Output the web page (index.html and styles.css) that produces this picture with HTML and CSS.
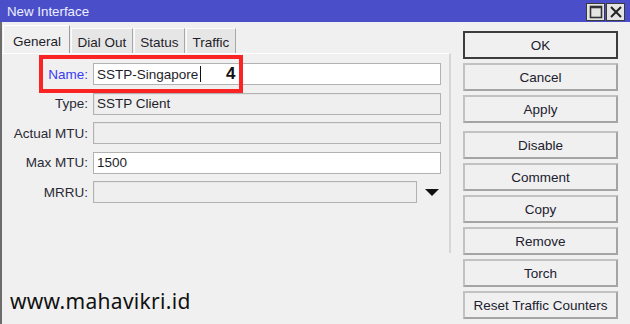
FILE: index.html
```html
<!DOCTYPE html>
<html>
<head>
<meta charset="utf-8">
<link rel="stylesheet" href="styles.css">
</head>
<body>
<div class="window">
  <div class="titlebar">
    <span class="title">New Interface</span>
    <div class="tb-buttons">
      <span class="tb-btn"><svg width="16" height="16" viewBox="0 0 16 16"><rect x="2.5" y="2.5" width="11" height="11" fill="none" stroke="#333" stroke-width="1.6"/><line x1="2.5" y1="3.5" x2="13.5" y2="3.5" stroke="#333" stroke-width="1.6"/></svg></span>
      <span class="tb-btn"><svg width="16" height="16" viewBox="0 0 16 16"><path d="M3 3 L13 13 M13 3 L3 13" stroke="#222" stroke-width="2"/></svg></span>
    </div>
  </div>
  <div class="content">
    <div class="left">
      <div class="tabs">
        <div class="tab active">General</div>
        <div class="tab">Dial Out</div>
        <div class="tab">Status</div>
        <div class="tab">Traffic</div>
      </div>
      <div class="panel">
        <div class="form">
          <div class="label blue">Name:</div>
          <div class="field white"><span>SSTP-Singapore</span><span class="caret"></span></div>
          <div class="label">Type:</div>
          <div class="field">SSTP Client</div>
          <div class="label">Actual MTU:</div>
          <div class="field"></div>
          <div class="label">Max MTU:</div>
          <div class="field white">1500</div>
          <div class="label">MRRU:</div>
          <div class="combo">
            <div class="field short"></div>
            <svg class="arrow" width="14" height="8" viewBox="0 0 14 8"><path d="M0 0 H14 L7 7 Z" fill="#111"/></svg>
          </div>
        </div>
      </div>
      <div class="watermark">www.mahavikri.id</div>
    </div>
    <div class="buttons">
      <div class="btn default">OK</div>
      <div class="btn">Cancel</div>
      <div class="btn">Apply</div>
      <div class="btn sep">Disable</div>
      <div class="btn">Comment</div>
      <div class="btn">Copy</div>
      <div class="btn">Remove</div>
      <div class="btn">Torch</div>
      <div class="btn">Reset Traffic Counters</div>
    </div>
  </div>
  <div class="highlight"></div>
  <div class="step">4</div>
</div>
</body>
</html>
```

FILE: styles.css
```css
* { box-sizing: border-box; }
html, body { margin: 0; padding: 0; }
body {
  width: 630px;
  height: 324px;
  overflow: hidden;
  font-family: "Liberation Sans", Arial, sans-serif;
  font-size: 13.5px;
  color: #1e1e2a;
}
.window {
  position: relative;
  width: 630px;
  height: 324px;
  background: #f0f0f0;
}
.titlebar {
  height: 22px;
  background: #4b4ec9;
  display: flex;
  align-items: center;
  justify-content: space-between;
  padding-left: 7px;
}
.title {
  color: #eef0ff;
  font-size: 13.3px;
  padding-top: 1px;
}
.tb-buttons {
  display: flex;
  gap: 1px;
  padding-right: 5px;
  align-self: flex-start;
  padding-top: 3px;
}
.tb-btn {
  width: 19px;
  height: 18px;
  background: #e4e4e4;
  border: 1px solid #3a3a3a;
  display: flex;
  align-items: center;
  justify-content: center;
}
.content {
  display: flex;
  height: 302px;
  border-left: 2px solid #6c6c6c;
  padding-top: 3px;
}
.left {
  width: 449px;
  display: flex;
  flex-direction: column;
}
.tabs {
  display: flex;
  align-items: flex-end;
  height: 28px;
  padding-left: 1px;
}
.tab {
  height: 25px;
  padding: 2px 5.5px 0;
  display: flex;
  align-items: center;
  background: #e6e6e6;
  border: 1px solid #d0d0d0;
  border-bottom: none;
  border-left-color: #fafafa;
  border-top-color: #fafafa;
  border-right-color: #a8a8a8;
}
.tab + .tab { margin-left: 1px; }
.tab.active {
  height: 28px;
  padding: 3px 8px 0 9px;
  background: #f0f0f0;
  border-left: 1px solid #ffffff;
  border-top: 1px solid #ffffff;
  border-right: 1px solid #9c9c9c;
}
.panel {
  border-top: 1px solid #ffffff;
  border-right: 2px solid #d6d6d6;
  padding-top: 9px;
  height: 200px;
}
.form {
  display: grid;
  grid-template-columns: 86px 348px;
  column-gap: 5px;
  row-gap: 7.5px;
  grid-auto-rows: 22px;
}
.label {
  text-align: right;
  display: flex;
  align-items: center;
  justify-content: flex-end;
  color: #2a2a36;
}
.label.blue { color: #3b3bf2; }
.field {
  height: 22px;
  border: 1px solid #b2b2b2;
  box-shadow: inset 1px 1px 0 #e6e6e6;
  background: #efefef;
  display: flex;
  align-items: center;
  padding-left: 3px;
  color: #1e1e2a;
}
.field.white { background: #ffffff; box-shadow: none; }
.caret {
  display: inline-block;
  width: 1px;
  height: 16px;
  background: #111;
  margin-left: 2px;
}
.combo {
  display: flex;
  align-items: center;
}
.field.short { width: 324px; }
.arrow { margin-left: 8px; margin-top: 2px; }
.watermark {
  margin-top: auto;
  margin-left: 8px;
  margin-bottom: 9px;
  font-family: "Noto Sans", sans-serif;
  font-weight: 400;
  font-size: 21px;
  color: #111;
  letter-spacing: 0.3px;
}
.buttons {
  margin-left: 12px;
  margin-top: 6px;
  width: 155px;
  display: flex;
  flex-direction: column;
  gap: 4px;
}
.btn {
  height: 28px;
  border: 2px solid #b4b4b4;
  border-top-color: #c2c2c2;
  border-left-color: #c2c2c2;
  border-right-color: #a4a4a4;
  border-bottom-color: #a4a4a4;
  display: flex;
  align-items: center;
  justify-content: center;
  background: #f0f0f0;
  color: #20202e;
}
.btn.default {
  border: 2px solid #3c3c3c;
}
.btn.sep { margin-top: 4px; }
.highlight {
  position: absolute;
  left: 39px;
  top: 55px;
  width: 204px;
  height: 38px;
  border: 4px solid #fb2424;
}
.step {
  position: absolute;
  left: 226px;
  top: 64px;
  font-family: "Liberation Sans", Arial, sans-serif;
  font-weight: bold;
  font-size: 17px;
  color: #111;
}
```
